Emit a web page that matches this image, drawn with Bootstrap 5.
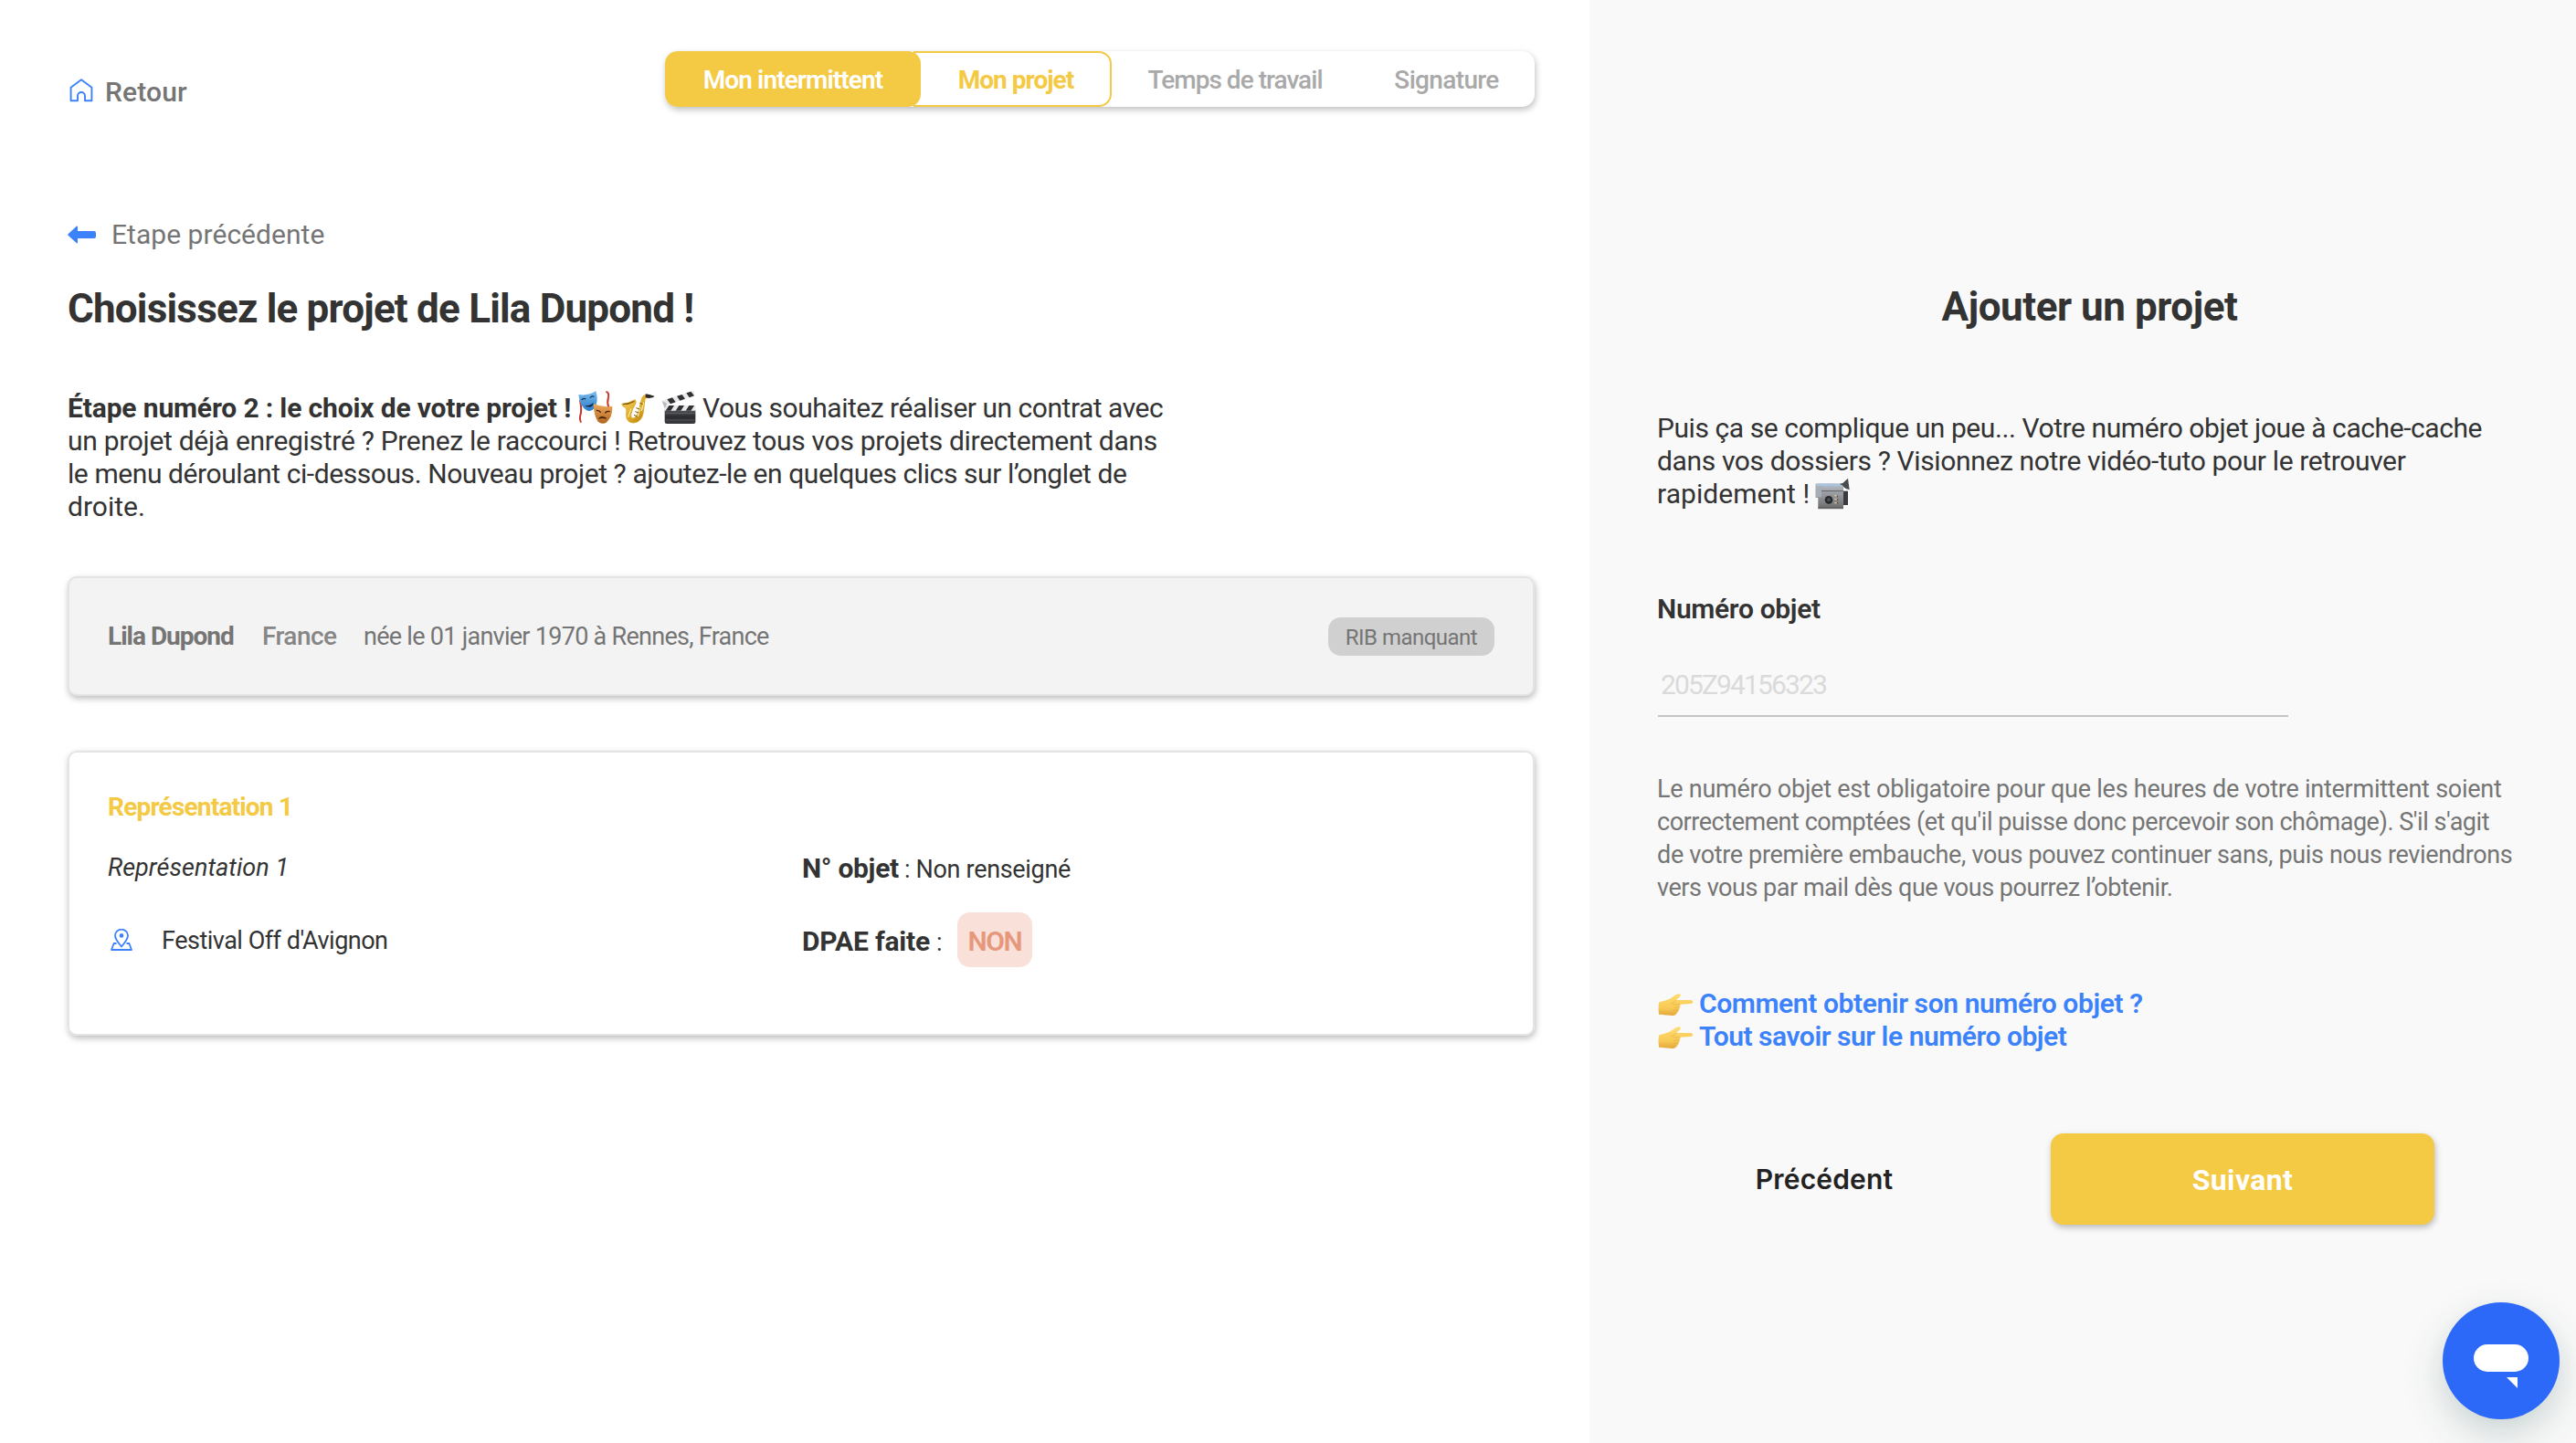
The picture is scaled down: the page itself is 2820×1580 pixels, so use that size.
<!DOCTYPE html>
<html lang="fr">
<head>
<meta charset="utf-8">
<meta name="viewport" content="width=device-width, initial-scale=1">
<title>Mon projet</title>
<link href="https://cdn.jsdelivr.net/npm/bootstrap@5.3.0/dist/css/bootstrap.min.css" rel="stylesheet">
<style>
:root{--gold:#f4c944;--ink:#333;--soft:#757575;--azure:#3b82fb}
body{font-family:Roboto,"Open Sans",sans-serif;font-size:30px;line-height:36px;color:var(--ink);background:#fff;height:1580px;overflow:hidden}
.pane-main{width:1740px;padding:56px 60px 0 74px}
.pane-side{width:1080px;background:#f9f9f9;padding:310px 59px 0 74px}
.raised{box-shadow:1px 3px 7px rgba(0,0,0,.26)}
.ln{display:block;white-space:nowrap}
svg{display:block;flex:none}
.soft{color:var(--soft)}
/* stepper */
.steps{width:952px;height:61px;border-radius:14px;background:#fff;font-size:28px;line-height:61px}
.step{text-align:center;color:#a9a9a9;font-weight:500;padding:1px 0 0;border-radius:14px;height:61px;white-space:nowrap}
.step-done{width:280px;background:var(--gold);color:#fff;font-weight:600;z-index:1;letter-spacing:-.9px}
.step-now{width:217px;margin-left:-8px;padding:0 0 0 7px;border:2px solid var(--gold);border-radius:0 14px 14px 0;color:var(--gold);font-weight:700;line-height:59px;letter-spacing:-.97px}
.step-a{width:270px;letter-spacing:-.97px}
.step-b{width:193px;letter-spacing:-.65px}
.back{margin-top:27px;font-weight:500;padding-left:2px;letter-spacing:.14px}
.prev{margin-top:120px;letter-spacing:.04px}
.title{font-size:44px;line-height:52px;font-weight:700;margin:0;white-space:nowrap}
/* cards */
.panel{width:1606px;border:2px solid #e4e4e4;border-radius:10px}
.person{height:131px;margin-top:58px;background:#f3f3f3;padding:0 42px 0 42px;font-size:28px}
.rib{width:182px;height:42px;border-radius:14px;background:#d0d0d0;font-size:24px;line-height:45px;text-align:center;letter-spacing:-.52px}
.project{height:312px;margin-top:60px;padding:42px 42px 0;font-size:27px}
.col-left{width:760px}
.dpae{height:60px;margin-top:29px}
.non{width:82px;height:60px;border-radius:14px;background:#f9e1da;color:#e7987c;font-size:30px;font-weight:600;line-height:63px;text-align:center;letter-spacing:-1.45px}
/* form */
.objet{width:690px;height:54px;margin:46px 0 0 1px;border:0;border-bottom:2px solid #c4c4c4;border-radius:0;background:transparent;padding:0 0 16px 3px;font-size:30px;line-height:36px;letter-spacing:-1.87px}
.objet::placeholder{color:#dadada;opacity:1}
.help{font-size:27px;margin-top:61px}
.links{margin-top:91px}
.links a{color:var(--azure);font-weight:600;text-decoration:none;white-space:nowrap;margin-left:6px}
.links svg{margin:6px 0 0 1px}
.actions{margin-top:88px}
.btn-prev{width:188px;height:100px;margin-left:89px;border:0;padding:0;font:600 30px/101px Inter,sans-serif;letter-spacing:.15px;color:#222}
.btn-next{width:420px;height:100px;margin-left:154px;border:0;border-radius:14px;background:var(--gold);color:#fff;font-size:32px;font-weight:700;line-height:102px;padding:0;letter-spacing:.35px}
.chat{position:absolute;left:2674px;top:1426px;width:128px;height:128px;border-radius:50%;background:#2d69f9;box-shadow:0 18px 48px rgba(20,60,60,.16),0 8px 24px rgba(20,60,60,.06)}
</style>
</head>
<body>
<svg width="0" height="0" class="position-absolute">
  <defs>
    <linearGradient id="gBlue" x1="0" y1="0" x2="0" y2="1"><stop offset="0" stop-color="#7cbdf0"/><stop offset="1" stop-color="#2a7dc9"/></linearGradient>
    <linearGradient id="gOrange" x1="0" y1="0" x2="0" y2="1"><stop offset="0" stop-color="#eeaa5c"/><stop offset="1" stop-color="#b3651f"/></linearGradient>
    <linearGradient id="gBrass" x1="0" y1="0" x2="1" y2="1"><stop offset="0" stop-color="#f9dc6c"/><stop offset=".55" stop-color="#dda925"/><stop offset="1" stop-color="#a8770f"/></linearGradient>
    <linearGradient id="gSlate" x1="0" y1="0" x2="0" y2="1"><stop offset="0" stop-color="#55565a"/><stop offset=".5" stop-color="#2c2d30"/><stop offset="1" stop-color="#3a3a3d"/></linearGradient>
    <linearGradient id="gSteel" x1="0" y1="0" x2="0" y2="1"><stop offset="0" stop-color="#b9bfc6"/><stop offset=".55" stop-color="#8d8f92"/><stop offset="1" stop-color="#6b6b6b"/></linearGradient>
    <linearGradient id="gHand" x1="0" y1="0" x2="0" y2="1"><stop offset="0" stop-color="#ffdc70"/><stop offset=".65" stop-color="#f8ca55"/><stop offset="1" stop-color="#e2a63a"/></linearGradient>
    <symbol id="hand" viewBox="47 46 115 78">
      <path d="M50 77Q60 74 68 72Q84 68 94 60Q106 50 116 50Q123 52 119 58L106 70L154 70Q161 71 161 76Q160 82 153 82L119 84Q121 88 117 93Q119 98 114 102Q114 108 109 111Q106 120 94 121L66 119Q58 116 50 118Q45 98 50 77Z" fill="url(#gHand)"/>
      <path d="M88 82Q98 82 106 70M96 85L119 84M98 95L117 93M97 104L114 102" fill="none" stroke="#d9962b" stroke-width="2" opacity=".6"/>
    </symbol>
  </defs>
</svg>
<div class="d-flex h-100">
  <main class="pane-main h-100 flex-shrink-0">
    <header class="d-flex justify-content-between align-items-start">
      <a href="#" class="back soft d-flex text-decoration-none">
        <svg width="26" height="26" viewBox="0 0 26 26" class="me-2" style="margin-top:3px" fill="none" stroke="#3b82fb" stroke-width="1.9" stroke-linejoin="round"><path d="M1.6 9.8L13 1.2L24.4 9.8V24.3H17V19a4 4 0 0 0-8 0V24.3H1.6Z"/></svg>
        <span style="margin-left:5px">Retour</span>
      </a>
      <nav class="steps raised d-flex">
        <div class="step step-done position-relative">Mon intermittent</div>
        <div class="step step-now">Mon projet</div>
        <div class="step step-a">Temps de travail</div>
        <div class="step step-b">Signature</div>
      </nav>
    </header>

    <a href="#" class="prev soft d-flex align-items-center text-decoration-none">
      <svg width="31" height="20" viewBox="0 0 31 20" fill="#3b82fb"><path d="M.6 9.2L10 .5Q11 .2 11 1.5V6H29Q31 6 31 8V12Q31 14 29 14H11V18.5Q11 19.8 10 19.3L.6 10.8Q0 10 .6 9.2Z"/></svg>
      <span style="margin-left:17px">Etape précédente</span>
    </a>

    <h1 class="title" style="letter-spacing:-.8px;margin-top:37px">Choisissez le projet de Lila Dupond !</h1>

    <div style="margin-top:65px">
      <div class="ln d-flex" style="height:36px">
        <b style="letter-spacing:-.15px;width:559px">Étape numéro 2 : le choix de votre projet !</b>
        <svg width="38" height="38" viewBox="99 51 114 114" style="margin-top:-2px" role="img" aria-label="Masques">
          <path d="M105 84Q112 120 105 138Q103 148 108 158M190 57Q201 58 198 75Q193 92 199 108" fill="none" stroke="#c9362c" stroke-width="6"/>
          <path d="M100 66Q132 71 157 54Q167 90 152 111Q141 124 127 118Q104 106 100 66Z" fill="url(#gBlue)"/>
          <path d="M110 84Q116 76 124 81M138 77Q144 69 151 73" fill="none" stroke="#14314d" stroke-width="4"/>
          <path d="M120 102Q138 104 149 92Q148 106 136 107Q127 107 120 102Z" fill="#12283d"/>
          <path d="M150 96Q178 110 211 104Q213 140 191 158Q177 166 164 155Q148 130 150 96Z" fill="url(#gOrange)"/>
          <path d="M158 118Q168 117 173 125M187 127Q193 119 203 122" fill="none" stroke="#3a1c0b" stroke-width="4"/>
          <path d="M166 145Q176 132 192 145Q178 141 166 145Z" fill="#3a1c0b" stroke="#3a1c0b" stroke-width="1.5"/>
        </svg>
        <svg width="38" height="38" viewBox="236 51 114 114" style="margin:-2px 0 0 8px" role="img" aria-label="Saxophone">
          <path d="M241 97Q262 96 285 83Q290 90 284 100Q276 112 272 128Q268 146 280 144Q290 142 297 118L308 76Q312 66 323 68L330 76Q320 74 317 82L311 128Q306 156 280 159Q256 158 256 134Q259 116 254 109Q244 107 241 97Z" fill="url(#gBrass)" stroke="#dda925" stroke-width="3"/>
          <path d="M245 98Q264 98 282 88" fill="none" stroke="#8a5f10" stroke-width="4"/>
          <path d="M272 112L262 140M302 108L294 138M313 92L306 120" stroke="#fff0a8" stroke-width="3.5"/>
          <path d="M288 110l12 4M285 122l12 4M281 133l10 5M300 94l10 4" stroke="#7d550c" stroke-width="3"/>
          <path d="M319 64L332 66L348 71L345 75L331 78L319 76Z" fill="#2b2b2d"/>
        </svg>
        <svg width="38" height="38" viewBox="373 51 114 114" style="margin:-2px 0 0 7px" role="img" aria-label="Clap">
          <path d="M384 116H485V156Q485 162 479 162H391Q384 162 384 156Z" fill="url(#gSlate)"/>
          <path d="M388 128H482M388 150H482" stroke="#77787c" stroke-width="1.6"/>
          <path d="M384 102H485V119H384Z" fill="#e9e9ea"/>
          <path d="M398 102H415L404 119H387ZM431 102H448L437 119H420ZM464 102H481L470 119H453Z" fill="#303135"/>
          <path d="M375 87L479 53L483 69L384 103Z" fill="#e9e9ea"/>
          <path d="M392 82L409 76L420 91L403 97ZM424 71L441 66L451 80L434 86ZM455 61L470 56L481 70L465 76Z" fill="#303135"/>
          <path d="M375 87L392 96L384 112Z" fill="#b9babd"/>
        </svg>
        <span style="letter-spacing:-.48px;margin-left:7px">Vous souhaitez réaliser un contrat avec</span>
      </div>
      <span class="ln" style="letter-spacing:-.3px">un projet déjà enregistré ? Prenez le raccourci ! Retrouvez tous vos projets directement dans</span>
      <span class="ln" style="letter-spacing:-.42px">le menu déroulant ci-dessous. Nouveau projet ? ajoutez-le en quelques clics sur l’onglet de</span>
      <span class="ln">droite.</span>
    </div>

    <section class="panel person raised soft d-flex align-items-center text-nowrap">
      <b style="width:169px;letter-spacing:-1px">Lila Dupond</b>
      <span style="width:111px;letter-spacing:-.55px;color:#868686;font-weight:500">France</span>
      <span style="font-size:27px;letter-spacing:-.72px">née le 01 janvier 1970 à Rennes, France</span>
      <span class="rib ms-auto">RIB manquant</span>
    </section>

    <section class="panel project raised text-nowrap">
      <div style="color:var(--gold);font-size:28px;font-weight:700;letter-spacing:-.8px">Représentation 1</div>
      <div class="d-flex">
        <div class="col-left">
          <div class="fst-italic" style="margin-top:30px;letter-spacing:.04px">Représentation 1</div>
          <div class="d-flex" style="margin-top:44px;padding-left:3px">
            <svg width="24" height="24" viewBox="0 0 24 24" fill="none" stroke="#3b82fb" stroke-width="1.8" stroke-linejoin="round" style="margin-top:5px"><path d="M12 19.5Q5 11.5 5 7.3A7 6.6 0 0 1 19 7.3Q19 11.5 12 19.5Z"/><circle cx="12" cy="7.4" r="1.4" fill="#3b82fb"/><path d="M6.5 16H3.6L1 23H23L20.4 16H17.5"/></svg>
            <span style="margin-left:32px;letter-spacing:-.5px">Festival Off d'Avignon</span>
          </div>
        </div>
        <div>
          <div class="d-flex align-items-baseline" style="margin-top:31px"><b style="font-size:30px;width:112px;letter-spacing:-.3px">N° objet</b><span style="letter-spacing:-.32px">: Non renseigné</span></div>
          <div class="dpae d-flex align-items-start">
            <div class="d-flex align-items-baseline" style="padding-top:14px"><b style="font-size:30px;width:147px;letter-spacing:-.2px">DPAE faite</b><span style="width:23px">:</span></div>
            <span class="non">NON</span>
          </div>
        </div>
      </div>
    </section>
  </main>

  <aside class="pane-side h-100 flex-shrink-0">
    <h2 class="title text-center" style="letter-spacing:-.45px">Ajouter un projet</h2>
    <div style="margin-top:89px">
      <span class="ln" style="letter-spacing:-.42px">Puis ça se complique un peu... Votre numéro objet joue à cache-cache</span>
      <span class="ln" style="letter-spacing:-.37px">dans vos dossiers ? Visionnez notre vidéo-tuto pour le retrouver</span>
      <div class="ln d-flex" style="height:36px"><span style="width:173px;letter-spacing:.05px">rapidement !</span>
        <svg width="38" height="35" viewBox="83 38 114 105" role="img" aria-label="Caméra">
          <path d="M156 60L174 56L191 40L196 78L184 74L176 68L156 68Z" fill="#4b4c50"/>
          <path d="M176 82H191V128H176Z" fill="#3a3b3f"/>
          <path d="M85 60Q85 57 90 57H160L176 66V141H93V104H85Z" fill="url(#gSteel)"/>
          <path d="M85 60H104V102H85Z" fill="#a9aeb5"/>
          <path d="M86 58H160L176 66H88Z" fill="#a8c4e0"/>
          <path d="M104 82H176M93 136H176" stroke="#5e6064" stroke-width="3"/>
          <circle cx="128" cy="111" r="13" fill="#26272a"/><circle cx="128" cy="111" r="6" fill="#4c4d52"/>
          <path d="M147 97h7M147 109h7M147 121h7" stroke="#d8cfa0" stroke-width="4"/><path d="M157 97v26" stroke="#6d2f2c" stroke-width="3" stroke-dasharray="5 6"/>
        </svg>
      </div>
    </div>
    <label for="objet" class="d-block" style="margin-top:90px;font-weight:600;letter-spacing:-.33px">Numéro objet</label>
    <input id="objet" class="form-control objet" placeholder="205Z94156323">
    <div class="help soft">
      <span class="ln" style="letter-spacing:-.25px">Le numéro objet est obligatoire pour que les heures de votre intermittent soient</span>
      <span class="ln" style="letter-spacing:-.46px">correctement comptées (et qu'il puisse donc percevoir son chômage). S'il s'agit</span>
      <span class="ln" style="letter-spacing:-.35px">de votre première embauche, vous pouvez continuer sans, puis nous reviendrons</span>
      <span class="ln" style="letter-spacing:-.47px">vers vous par mail dès que vous pourrez l’obtenir.</span>
    </div>
    <div class="links">
      <div class="d-flex"><svg width="39" height="26"><use href="#hand"/></svg><a href="#" style="letter-spacing:-.4px">Comment obtenir son numéro objet ?</a></div>
      <div class="d-flex"><svg width="39" height="26"><use href="#hand"/></svg><a href="#" style="letter-spacing:-.46px">Tout savoir sur le numéro objet</a></div>
    </div>
    <div class="actions d-flex">
      <button class="btn btn-prev">Précédent</button>
      <button class="btn btn-next raised">Suivant</button>
    </div>
  </aside>
</div>
<button class="btn chat p-0 border-0" aria-label="Chat">
  <svg width="128" height="128" viewBox="0 0 128 128" fill="#fff"><rect x="34" y="46" width="60" height="30" rx="15"/><path d="M70 82H82V94Z"/></svg>
</button>
<script src="https://cdn.jsdelivr.net/npm/bootstrap@5.3.0/dist/js/bootstrap.bundle.min.js"></script>
</body>
</html>
